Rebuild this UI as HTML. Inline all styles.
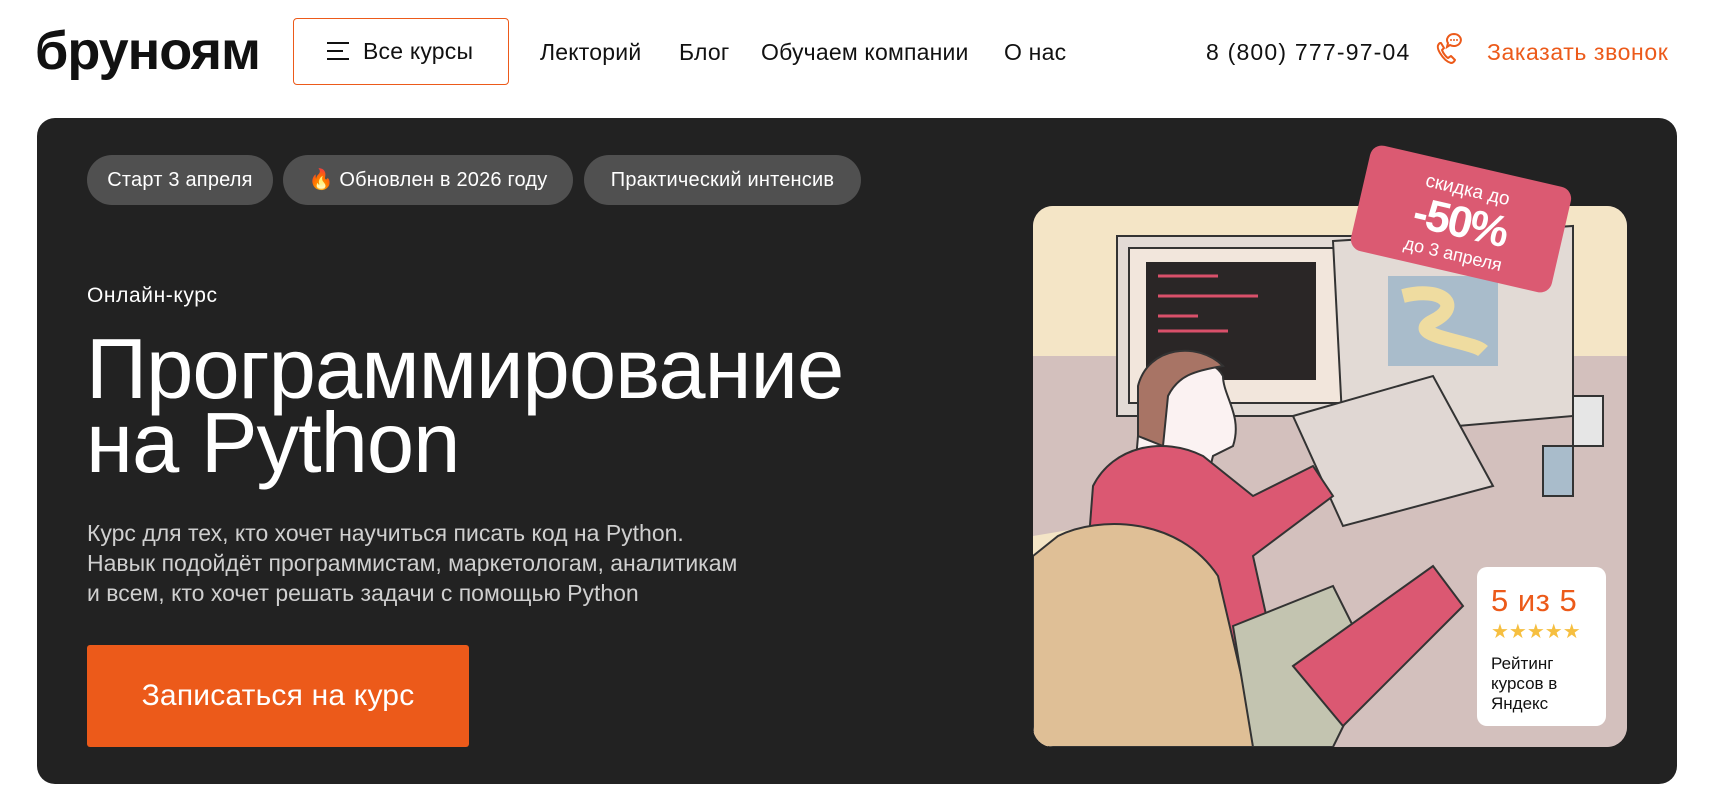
<!DOCTYPE html>
<html><head><meta charset="utf-8"><style>
*{margin:0;padding:0;box-sizing:border-box}
body{width:1717px;height:795px;background:#fff;font-family:"Liberation Sans",sans-serif;position:relative;overflow:hidden;color:#111}
.a{position:absolute;white-space:nowrap}
.logo{left:35px;top:20px;font-size:54px;font-weight:bold;letter-spacing:-1px}
.btn{left:293px;top:18px;width:216px;height:67px;border:1.5px solid #ec5a1a;border-radius:4px}
.nav{font-size:23px;top:39px;letter-spacing:0.2px}
.card{left:37px;top:118px;width:1640px;height:666px;background:#222;border-radius:18px}
.chip{top:155px;height:50px;border-radius:25px;background:#505050;color:#fff;font-size:20px;line-height:50px;text-align:center;letter-spacing:0.2px}
.title{left:86px;top:333px;font-size:85px;color:#fff;line-height:74px;letter-spacing:-1px}
.para{left:87px;top:518px;font-size:23px;color:#cfcfcf;line-height:30px;letter-spacing:0px}
.cta{left:87px;top:645px;width:382px;height:102px;background:#ec5a1a;border-radius:3px;color:#fff;font-size:30px;line-height:102px;text-align:center;letter-spacing:0.2px}
.img{left:1033px;top:206px;width:594px;height:541px;border-radius:20px;overflow:hidden;background:#d3c0bd}
.rate{left:1477px;top:567px;width:129px;height:159px;background:#fff;border-radius:10px}
</style></head><body>
<div class="a logo">бруноям</div>
<div class="a btn">
 <svg class="a" style="left:31px;top:22px" width="26" height="20"><path d="M2 2h22M2 10h16M2 18h22" stroke="#111" stroke-width="2"/></svg>
 <div class="a" style="left:69px;top:19px;font-size:23px;letter-spacing:0.2px">Все курсы</div>
</div>
<div class="a nav" style="left:540px">Лекторий</div>
<div class="a nav" style="left:679px">Блог</div>
<div class="a nav" style="left:761px">Обучаем компании</div>
<div class="a nav" style="left:1004px">О нас</div>
<div class="a nav" style="left:1206px;letter-spacing:1.2px">8 (800) 777-97-04</div>
<svg class="a" style="left:1434px;top:31px" width="30" height="34" viewBox="0 0 30 34"><path d="M6 12c-3 2-3 5 0 10s7 9 11 10c2 0 3-1 4-3l-4-4-3 2c-2-1-5-5-6-8l2-2-3-5z" fill="none" stroke="#ec5a1a" stroke-width="2" stroke-linejoin="round"/><path d="M20 3a7 6 0 1 1-4 11l-3 2 1-4a7 6 0 0 1 6-9z" fill="none" stroke="#ec5a1a" stroke-width="2"/><circle cx="17" cy="9" r="1" fill="#ec5a1a"/><circle cx="20" cy="9" r="1" fill="#ec5a1a"/><circle cx="23" cy="9" r="1" fill="#ec5a1a"/></svg>
<div class="a nav" style="left:1487px;color:#ec5a1a;letter-spacing:0.6px">Заказать звонок</div>

<div class="a card"></div>
<div class="a chip" style="left:87px;width:186px">Старт 3 апреля</div>
<div class="a chip" style="left:283px;width:290px">🔥 Обновлен в 2026 году</div>
<div class="a chip" style="left:584px;width:277px">Практический интенсив</div>
<div class="a" style="left:87px;top:284px;font-size:21px;color:#fff;letter-spacing:0.6px">Онлайн-курс</div>
<div class="a title">Программирование<br>на Python</div>
<div class="a para">Курс для тех, кто хочет научиться писать код на Python.<br>Навык подойдёт программистам, маркетологам, аналитикам<br>и всем, кто хочет решать задачи с помощью Python</div>
<div class="a cta">Записаться на курс</div>

<div class="a img">
<svg width="594" height="541" viewBox="0 0 594 541">
 <rect width="594" height="150" fill="#f4e5c6"/>
 <rect y="150" width="594" height="391" fill="#d3c0bd"/>
 <path d="M0 330 L60 320 L140 541 L0 541Z" fill="#f4e5c6"/>
 <rect x="84" y="30" width="240" height="180" fill="#e2dad5" stroke="#333" stroke-width="2"/>
 <rect x="96" y="42" width="216" height="155" fill="#f2e6dc" stroke="#333" stroke-width="2"/>
 <rect x="113" y="56" width="170" height="118" fill="#2a2626"/>
 <path d="M125 70h60M125 90h100M125 110h40M125 125h70" stroke="#d9506a" stroke-width="3"/>
 <path d="M300 35 L540 20 L540 210 L310 230Z" fill="#e2dad5" stroke="#333" stroke-width="2"/>
 <rect x="355" y="70" width="110" height="90" fill="#a9bccb"/>
 <path d="M370 90c40-10 60 10 30 25s40 20 50 30" stroke="#efdca0" stroke-width="14" fill="none"/>
 <path d="M260 210 L400 170 L460 280 L310 320Z" fill="#e0d7d3" stroke="#333" stroke-width="2"/>
 <rect x="510" y="240" width="30" height="50" fill="#a9bccb" stroke="#333" stroke-width="2"/>
 <rect x="540" y="190" width="30" height="50" fill="#e6e6e6" stroke="#333" stroke-width="2"/>
 <path d="M110 170c20-30 70-20 80 0 0 20 20 40 10 70l-20 10-10 40-70 0Z" fill="#fbf2f2" stroke="#333" stroke-width="2"/>
 <path d="M105 180c10-40 60-45 85-20-30 5-45 10-55 30l-5 50-25-10Z" fill="#a87465" stroke="#333" stroke-width="2"/>
 <path d="M60 280c20-40 70-50 110-30l50 40 60-30 20 30-80 60 40 180-220 10Z" fill="#db5872" stroke="#333" stroke-width="2"/>
 <path d="M25 330c40-20 120-20 160 40l40 171H0V350Z" fill="#dfbf96" stroke="#333" stroke-width="2"/>
 <path d="M200 420 L300 380 L340 460 L300 541 L220 541Z" fill="#c3c4b0" stroke="#333" stroke-width="2"/>
 <path d="M260 460 L400 360 L430 400 L310 520Z" fill="#db5872" stroke="#333" stroke-width="2"/>
</svg>
</div>
<div class="a" style="left:1358px;top:165px;width:206px;height:108px;background:#db5a72;border-radius:12px;transform:rotate(13deg);color:#fff;text-align:center">
 <div style="font-size:19px;margin-top:14px">скидка до</div>
 <div style="font-size:44px;font-weight:bold;line-height:44px;letter-spacing:-2px">-50%</div>
 <div style="font-size:18px">до 3 апреля</div>
</div>
<div class="a rate">
 <div class="a" style="left:14px;top:16px;font-size:31px;color:#ec5a1a;letter-spacing:0.5px">5 из 5</div>
 <div class="a" style="left:14px;top:52px;font-size:20px;color:#f6bf40">★★★★★</div>
 <div class="a" style="left:14px;top:87px;font-size:17px;line-height:20px;color:#111">Рейтинг<br>курсов в<br>Яндекс</div>
</div>
</body></html>
